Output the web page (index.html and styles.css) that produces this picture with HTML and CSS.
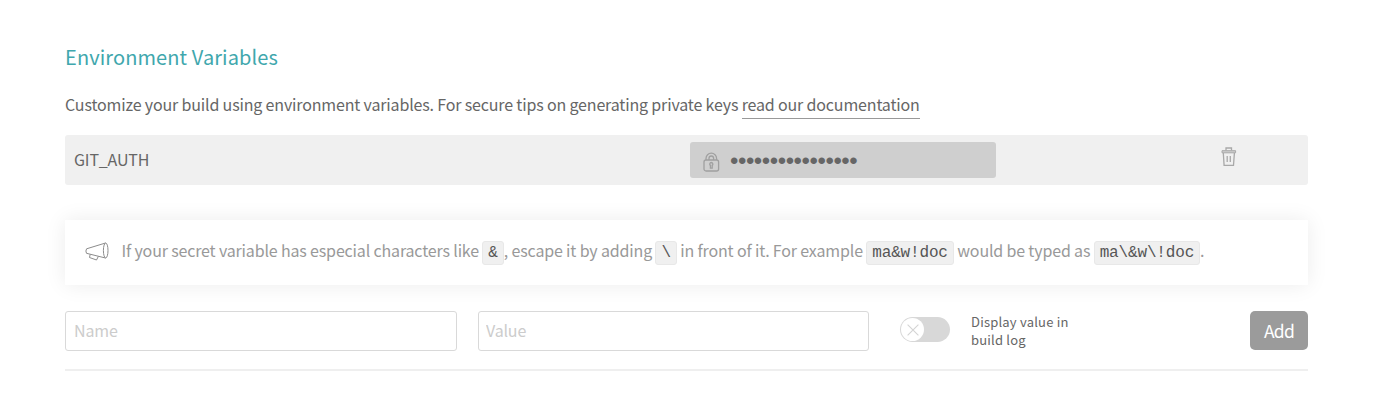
FILE: index.html
```html
<!DOCTYPE html>
<html lang="en">
<head>
<meta charset="utf-8">
<title>Environment Variables</title>
<link rel="stylesheet" href="styles.css">
</head>
<body>
<main class="panel">
  <h2 class="title">Environment Variables</h2>
  <p class="intro">Customize your build using environment variables. For secure tips on generating private keys <a class="doc-link">read our documentation</a></p>
  <div class="variable">
    <span class="variable-name">GIT_AUTH</span>
    <div class="secret">
      <svg class="lock" width="18" height="20" viewBox="0 0 18 20" fill="none" stroke="#a0a0a0" stroke-width="1.300">
        <rect x="1" y="8" width="14.600" height="11" rx="2"/>
        <path d="M3 8V6.500a5.300 5.300 0 0 1 10.600 0V8M6 8V6.300a2.300 2.300 0 0 1 4.600 0V8"/>
        <path d="M8.300 10.500a1.600 1.600 0 0 0-.9 2.900v2.800h1.800v-2.800a1.600 1.600 0 0 0-.9-2.900z"/>
      </svg>
      <span class="dots">••••••••••••••••</span>
    </div>
    <svg class="trash" width="16" height="20" viewBox="0 0 16 20" fill="none" stroke="#a8a8a8" stroke-width="1.300">
      <path d="M5 3.500V1h5.500v2.500M2.300 6l.8 12.400h9.400L13.400 6M6.200 9v6M9.300 9v6"/>
      <path d="M1 3.700h13.600v2.100H1z" fill="#ccc" stroke-width="1"/>
    </svg>
  </div>
  <div class="notice">
    <svg class="horn" width="24" height="20" viewBox="0 0 24 20" fill="none" stroke="#8c8c8c" stroke-width="1" stroke-linejoin="round">
      <path d="M20.500 1L1.600 6.800Q.2 9 1.500 11.300L20.500 16"/>
      <ellipse cx="20.700" cy="8.500" rx="2.300" ry="7.500"/>
      <path d="M5.200 12.300L4.500 15.500L11.500 18L13.400 14.300"/>
    </svg>
    <p class="notice-text">If your secret variable has especial characters like <code>&amp;</code>, escape it by adding <code>\</code> in front of it. For example <code>ma&amp;w!doc</code> would be typed as <code>ma\&amp;w\!doc</code>.</p>
  </div>
  <form class="form">
    <input class="field name" placeholder="Name">
    <input class="field value" placeholder="Value">
    <div class="toggle"><span class="knob"><svg width="12" height="12" viewBox="0 0 12 12" stroke="#d4d4d4" stroke-width="1.100"><path d="M.6.6l10.800 10.800M11.400.6L.6 11.400"/></svg></span></div>
    <span class="toggle-label">Display value in<br>build log</span>
    <button class="add" type="button">Add</button>
  </form>
</main>
</body>
</html>
```

FILE: styles.css
```css
* { box-sizing: border-box; }
body {
  margin: 0;
  background: #fff;
  color: #666;
  font: 16px/24px "Noto Sans CJK SC", sans-serif;
  letter-spacing: -.16px;
}
.panel { width: 1243px; margin-left: 65px; padding-top: 41px; }
.title { margin: 0; font-size: 20px; font-weight: 400; line-height: 32px; letter-spacing: .1px; color: #3fa7ad; }
.intro { margin: 19px 0 0; height: 43px; white-space: nowrap; }
.doc-link { display: inline-block; height: 27px; border-bottom: 1px solid #999; vertical-align: top; }
.variable {
  display: flex;
  height: 50px;
  padding: 7px 0 7px 9px;
  border-radius: 3px;
  background: #f0f0f0;
}
.variable-name { width: 616px; line-height: 34px; }
.secret { display: flex; width: 306px; height: 36px; padding: 10px 13px; border-radius: 3px; background: #cfcfcf; }
.lock { flex: none; }
.dots { margin-left: 9px; font: 24px/18px "Liberation Sans", sans-serif; letter-spacing: -.45px; }
.trash { margin: 5px 0 0 225px; }
.notice {
  display: flex;
  height: 65px;
  margin-top: 35px;
  padding: 18px 20px;
  background: #fff;
  box-shadow: 0 0 20px rgba(0, 0, 0, .08);
  color: #999;
}
.horn { margin: 4px 0 0 -.5px; }
.notice-text { margin: 0 0 0 13px; white-space: nowrap; }
code {
  display: inline-block;
  height: 24px;
  padding: 0 5px;
  border: 1px solid #e8e8e8;
  border-radius: 3px;
  background: #f0f0f0;
  color: #555;
  font: 16px/22px "Liberation Mono", monospace;
}
.form { display: flex; height: 86px; padding-top: 26px; border-bottom: 2px solid #efefef; }
.field {
  height: 40px;
  padding: 0 8px 2px;
  border: 1px solid #d9d9d9;
  border-radius: 3px;
  font: inherit;
  letter-spacing: inherit;
}
.field::placeholder { color: #ccc; opacity: 1; }
.name { width: 392px; }
.value { width: 391px; margin-left: 21px; padding-left: 7px; }
.toggle { width: 50px; height: 25px; margin: 6px 0 0 31px; padding: 1px; border-radius: 13px; background: #d8d8d8; }
.knob { display: flex; width: 23px; height: 23px; align-items: center; justify-content: center; border-radius: 50%; background: #fff; }
.toggle-label { width: 279px; margin-left: 21px; padding-top: 2px; font-size: 13px; line-height: 18px; letter-spacing: .2px; }
.add { width: 58px; height: 39px; padding: 0; border: 0; border-radius: 5px; background: #9b9b9b; color: #fff; font: inherit; font-size: 17.5px; letter-spacing: -.7px; }
```
